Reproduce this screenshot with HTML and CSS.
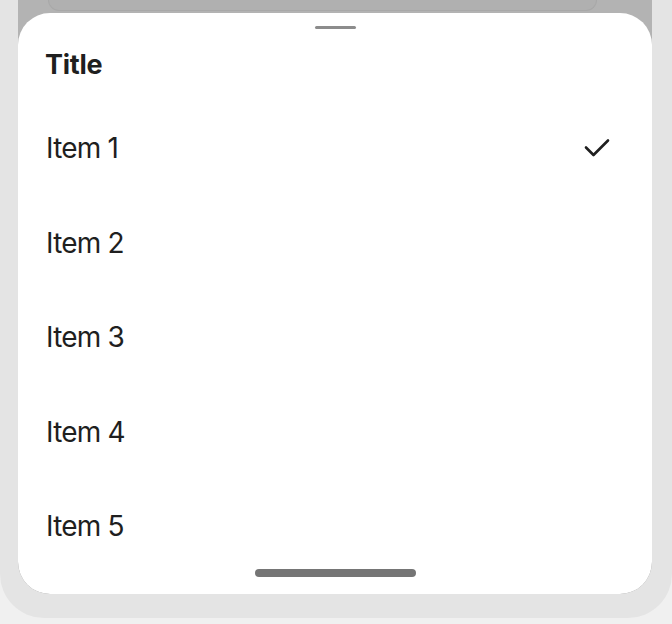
FILE: index.html
```html
<!DOCTYPE html>
<html lang="en">
<head>
  <meta charset="UTF-8" />
  <meta name="viewport" content="width=device-width, initial-scale=1.0" />
  <title>Bottom Sheet</title>
  <link rel="stylesheet" href="styles.css">
</head>
<body>

  <div class="phone">
    <div class="screen">
      <div class="topCard"></div>

      <div class="sheet">
        <div class="handle"></div>
        <h2 class="sheetTitle">Title</h2>

        <ul class="options">
          <li class="option selected">
            <span>Item 1</span>
            <svg class="check" width="26" height="20" viewBox="0 0 26 20">
              <path d="M2 9.5 L9.5 17 L24 2.5" fill="none" stroke="#1f1f1f" stroke-width="2.6" stroke-linecap="round" stroke-linejoin="round"/>
            </svg>
          </li>
          <li class="option"><span>Item 2</span></li>
          <li class="option"><span>Item 3</span></li>
          <li class="option"><span>Item 4</span></li>
          <li class="option"><span>Item 5</span></li>
        </ul>

        <div class="homeBar"></div>
      </div>
    </div>
  </div>

</body>
</html>
```

FILE: styles.css
```css
body {
  margin: 0;
  background: #f0f0f0;
  font-family: Inter, "Noto Sans", sans-serif;
  color: #1f1f1f;
  overflow: hidden;
}
.phone {
  width: 672px;
  box-sizing: border-box;
  background: #e4e4e4;
  padding: 0 20px 24px 18px;
  border-radius: 0 0 44px 44px;
}
.screen {
  background: #b3b3b3;
  border-radius: 0 0 32px 32px;
  overflow: hidden;
}
.topCard {
  height: 10px;
  margin: 0 55px 0 30px;
  background: #b0b0b0;
  border: 1px solid #a8a8a8;
  border-top: none;
  border-radius: 0 0 12px 12px;
}
.sheet {
  margin-top: 2px;
  background: white;
  border-radius: 32px;
  padding: 13px 0 17px;
  display: flex;
  flex-direction: column;
}
.handle {
  width: 41px;
  height: 3px;
  border-radius: 2px;
  background: #8c8c8c;
  align-self: center;
}
.sheetTitle {
  margin: 20px 0 0;
  padding-left: 27px;
  font-size: 27px;
  line-height: 32px;
  font-weight: 700;
  letter-spacing: -0.3px;
}
.options {
  list-style: none;
  margin: 19.75px 0 0;
  padding: 0;
}
.option {
  height: 94.5px;
  display: flex;
  align-items: center;
  justify-content: space-between;
  padding: 0 42px 0 28px;
  font-size: 28px;
  letter-spacing: -0.8px;
}
.homeBar {
  margin-top: -4.25px;
  width: 161px;
  height: 8px;
  border-radius: 4px;
  background: #757575;
  align-self: center;
}
```
